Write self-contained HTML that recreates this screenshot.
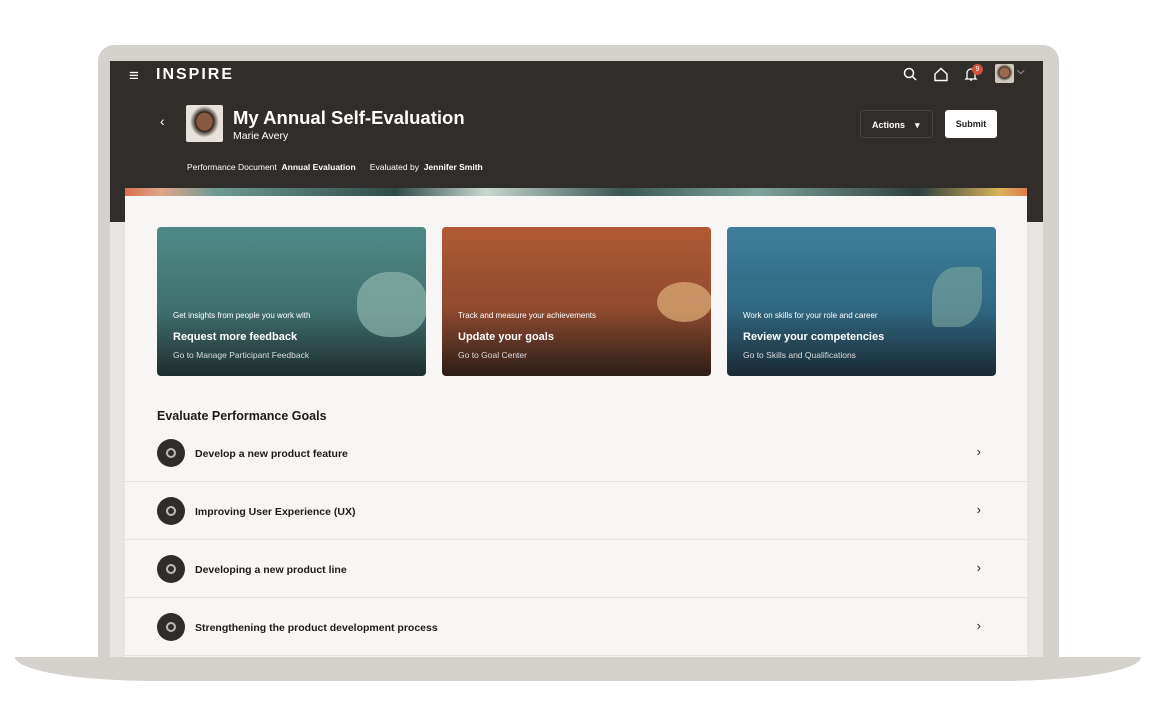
<!DOCTYPE html>
<html><head><style>
*{margin:0;padding:0;box-sizing:border-box}
body{width:1149px;height:725px;background:#fff;position:relative;overflow:hidden;font-family:"Liberation Sans",sans-serif}
.frame{position:absolute;left:98px;top:45px;width:961px;height:630px;background:#d5d2cd;border-radius:16px 16px 0 0}
.screen{position:absolute;left:110px;top:61px;width:933px;height:596px;background:#e8e6e2;overflow:hidden}
.dark{position:absolute;left:0;top:0;width:933px;height:161px;background:#312d2a}
.base{position:absolute;left:15px;top:657px;width:1126px;height:24px;background:#d5d2cd;border-radius:0 0 140px 140px/0 0 24px 24px}
.card{position:absolute;left:15px;top:127px;width:902px;height:480px;background:#f7f6f4}
.strip{position:absolute;left:0;top:0;width:902px;height:8px;background:linear-gradient(90deg,#d9704a 0,#e0a58a 4%,#6f9a94 10%,#2f4a48 30%,#c8d8d0 40%,#3a5553 55%,#7fa39c 70%,#2d3f3e 88%,#d8b45a 97%,#e07a4c 100%)}
.w{color:#fff;position:absolute}
.tile{position:absolute;top:166px;width:269px;height:149px;border-radius:4px;overflow:hidden}
.tile .t1{position:absolute;left:16px;top:84px;font-size:8px;color:#fff}
.tile .t2{position:absolute;left:16px;top:104px;font-size:11px;font-weight:bold;color:#fff}
.tile .t3{position:absolute;left:16px;top:123px;font-size:8.5px;color:#ddd}
.row{position:absolute;left:15px;width:902px;height:58px;border-bottom:1px solid #e4e1dc}
.row .ic{position:absolute;left:32px;top:15px;width:28px;height:28px;border-radius:50%;background:#2f2c2a}
.row .ic:after{content:"";position:absolute;left:9px;top:9px;width:10px;height:10px;border-radius:50%;border:2px solid #bbb;box-sizing:border-box}
.row .tx{position:absolute;left:70px;top:24px;font-size:10.5px;font-weight:bold;color:#1d1b1a}
.row .ch{position:absolute;right:46px;top:20px;font-size:13px;color:#222}
</style></head><body>
<div class="frame"></div>
<div class="base"></div>
<div class="screen">
<div class="dark"></div>
<div class="w" style="left:19px;top:5px;font-size:17px">≡</div>
<div class="w" style="left:46px;top:5px;font-size:16px;font-weight:bold;letter-spacing:2px">INSPIRE</div>
<svg style="position:absolute;left:793px;top:6px" width="15" height="15" viewBox="0 0 15 15"><circle cx="6" cy="6" r="4.5" fill="none" stroke="#fff" stroke-width="1.5"/><path d="M9.5 9.5L13 13" stroke="#fff" stroke-width="1.5"/></svg>
<svg style="position:absolute;left:823px;top:6px" width="16" height="15" viewBox="0 0 16 15"><path d="M2 7L8 1.5L14 7V13.5H2Z" fill="none" stroke="#fff" stroke-width="1.4"/></svg>
<svg style="position:absolute;left:854px;top:6px" width="14" height="15" viewBox="0 0 14 15"><path d="M3 11V6a4 4 0 0 1 8 0v5l1 1H2z M6 13h2" fill="none" stroke="#fff" stroke-width="1.3"/></svg>
<div style="position:absolute;left:862px;top:3px;width:11px;height:11px;border-radius:50%;background:#d0523e;color:#fff;font-size:7px;text-align:center;line-height:11px">9</div>
<div style="position:absolute;left:885px;top:3px;width:19px;height:19px;border-radius:2px;background:radial-gradient(circle at 50% 45%,#9a6a4e 35%,#3a2a22 37%,#cfc8bd 60%)"></div>
<div class="w" style="left:907px;top:5px;font-size:10px">⌵</div>
<div class="w" style="left:50px;top:52px;font-size:14px">‹</div>
<div style="position:absolute;left:76px;top:44px;width:37px;height:37px;border-radius:2px;background:radial-gradient(ellipse at 50% 45%,#8a5a40 30%,#2b1e18 33%,#e6e1da 55%)"></div>
<div class="w" style="left:123px;top:46px;font-size:18.5px;font-weight:bold">My Annual Self-Evaluation</div>
<div class="w" style="left:123px;top:69px;font-size:10.5px">Marie Avery</div>
<div class="w" style="left:77px;top:101px;font-size:8.5px">Performance Document&nbsp; <b>Annual Evaluation</b>&nbsp;&nbsp;&nbsp;&nbsp;&nbsp;&nbsp;Evaluated by&nbsp; <b>Jennifer Smith</b></div>
<div style="position:absolute;left:750px;top:49px;width:73px;height:28px;border:1px solid #4a4542;border-radius:3px;color:#fff;font-size:9px;font-weight:bold;padding:9px 0 0 11px">Actions &nbsp;&nbsp;&nbsp;▾</div>
<div style="position:absolute;left:835px;top:49px;width:52px;height:28px;background:#fff;border-radius:3px;font-size:9px;font-weight:bold;text-align:center;line-height:28px;color:#222">Submit</div>
<div class="card"><div class="strip"></div></div>
<div class="tile" style="left:47px;background:linear-gradient(180deg,#4e8985 0%,#3f716e 55%,#1e2d2e 100%)"><div style="position:absolute;left:200px;top:45px;width:70px;height:65px;border-radius:45%;background:#8fb5ae;opacity:.7"></div><div class="t1">Get insights from people you work with</div><div class="t2">Request more feedback</div><div class="t3">Go to Manage Participant Feedback</div></div>
<div class="tile" style="left:332px;background:linear-gradient(180deg,#b15a35 0%,#8f4a2e 55%,#2c1e18 100%)"><div style="position:absolute;left:215px;top:55px;width:55px;height:40px;border-radius:50%;background:#e0b07a;opacity:.7"></div><div class="t1">Track and measure your achievements</div><div class="t2">Update your goals</div><div class="t3">Go to Goal Center</div></div>
<div class="tile" style="left:617px;background:linear-gradient(180deg,#3f7f9c 0%,#2f6781 55%,#1a2a33 100%)"><div style="position:absolute;left:205px;top:40px;width:50px;height:60px;border-radius:50% 10%;background:#7fa8a0;opacity:.6"></div><div class="t1">Work on skills for your role and career</div><div class="t2">Review your competencies</div><div class="t3">Go to Skills and Qualifications</div></div>
<div style="position:absolute;left:47px;top:348px;font-size:12.5px;font-weight:bold;color:#1d1b1a">Evaluate Performance Goals</div>
<div class="row" style="top:363px"><div class="ic"></div><div class="tx">Develop a new product feature</div><div class="ch">›</div></div>
<div class="row" style="top:421px"><div class="ic"></div><div class="tx">Improving User Experience (UX)</div><div class="ch">›</div></div>
<div class="row" style="top:479px"><div class="ic"></div><div class="tx">Developing a new product line</div><div class="ch">›</div></div>
<div class="row" style="top:537px"><div class="ic"></div><div class="tx">Strengthening the product development process</div><div class="ch">›</div></div>
</div>
</body></html>
